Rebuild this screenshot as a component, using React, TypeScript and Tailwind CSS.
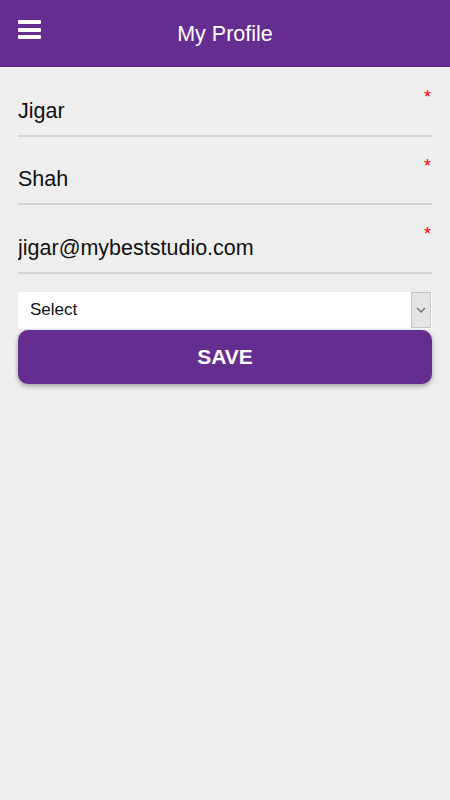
import React, { useState } from 'react';

const fields = [
  { key: 'first', value: 'Jigar' },
  { key: 'last', value: 'Shah' },
  { key: 'email', value: 'jigar@mybeststudio.com' },
];

const App: React.FC = () => {
  const [values, setValues] = useState<Record<string, string>>({
    first: 'Jigar',
    last: 'Shah',
    email: 'jigar@mybeststudio.com',
  });

  return (
    <div className="min-h-[800px] w-full bg-[#eeeeee] font-['Liberation_Sans',Arial,sans-serif]">
      {/* Header */}
      <div className="relative flex h-[67px] items-center justify-center border-b border-[#55208a] bg-[#662d91] pt-[3px]">
        <button className="absolute left-[18px] top-[20px] flex w-[23px] flex-col gap-[3.5px]">
          <span className="block h-[4px] w-full rounded-[1px] bg-white" />
          <span className="block h-[4px] w-full rounded-[1px] bg-white" />
          <span className="block h-[4px] w-full rounded-[1px] bg-white" />
        </button>
        <h1 className="text-[21.5px] leading-none text-white">My Profile</h1>
      </div>

      {/* Form */}
      <div className="px-[18px] pt-[1px]">
        {fields.map((f) => (
          <div key={f.key} className="relative h-[68.5px] border-b-2 border-[#d5d5d5]">
            <span className="absolute right-[1px] top-[20px] text-[18px] leading-none text-[#ff0000]">*</span>
            <input
              value={values[f.key]}
              onChange={(e) => setValues({ ...values, [f.key]: e.target.value })}
              className="absolute bottom-[11px] left-0 w-[390px] bg-transparent text-[21.5px] leading-[26px] text-[#111111] outline-none"
            />
          </div>
        ))}

        <div className="mt-[18px] flex h-[37px] items-center bg-white">
          <span className="flex-1 pl-[12px] text-[17px] text-[#111111]">Select</span>
          <div className="mr-[1px] flex h-[36px] w-[20px] items-center justify-center border border-[#c4c4c4] bg-[#e4e4e4]">
            <svg width="10" height="6" viewBox="0 0 10 6" fill="none">
              <path d="M1 1l4 4 4-4" stroke="#777777" strokeWidth="1.5" />
            </svg>
          </div>
        </div>

        <button className="mt-[1px] flex h-[54px] w-full items-center justify-center rounded-[10px] bg-[#662d91] text-[21px] font-bold text-white shadow-[0_2px_5px_rgba(0,0,0,0.35)]">
          SAVE
        </button>
      </div>
    </div>
  );
};

export default App;
